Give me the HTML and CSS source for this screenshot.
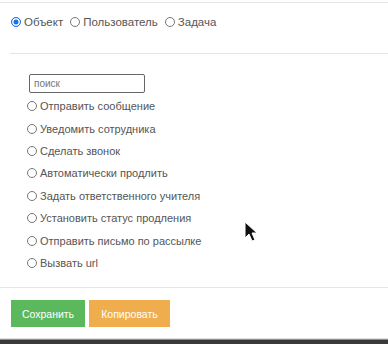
FILE: index.html
```html
<!DOCTYPE html>
<html>
<head>
    <title>Действие</title>
    <link rel="stylesheet" href="styles.css">
</head>
<body>
    <div class="modal">
        <div class="modal-header">
            <label class="choice"><input type="radio" name="type" checked> Объект</label>
            <label class="choice"><input type="radio" name="type"> Пользователь</label>
            <label class="choice"><input type="radio" name="type"> Задача</label>
        </div>
        <div class="modal-body">
            <input type="text" class="search" placeholder="поиск">
            <ul class="actions">
                <li><label><input type="radio" name="action"> Отправить сообщение</label></li>
                <li><label><input type="radio" name="action"> Уведомить сотрудника</label></li>
                <li><label><input type="radio" name="action"> Сделать звонок</label></li>
                <li><label><input type="radio" name="action"> Автоматически продлить</label></li>
                <li><label><input type="radio" name="action"> Задать ответственного учителя</label></li>
                <li><label><input type="radio" name="action"> Установить статус продления</label></li>
                <li><label><input type="radio" name="action"> Отправить письмо по рассылке</label></li>
                <li><label><input type="radio" name="action"> Вызвать url</label></li>
            </ul>
            <svg class="cursor" width="16" height="22" viewBox="0 0 16 22">
                <path d="M1 1 L1 17 L5 13 L8 20 L11 19 L8 12 L13 12 Z" fill="#111" stroke="#fff" stroke-width="1"/>
            </svg>
        </div>
        <div class="modal-footer">
            <button class="btn btn-save">Сохранить</button>
            <button class="btn btn-copy">Копировать</button>
        </div>
    </div>
    <div class="backdrop"></div>
</body>
</html>
```

FILE: styles.css
```css
body {
    margin: 0;
    font-family: "Liberation Sans", Arial, sans-serif;
    font-size: 11px;
    color: #555;
    background-color: #fff;
}

.modal {
    border-top: 1px solid #e5e5e5;
    margin-top: 2px;
}

.modal-header {
    display: flex;
    align-items: center;
    gap: 7px;
    height: 38px;
    padding-left: 11px;
}

.choice {
    display: flex;
    align-items: center;
    gap: 3px;
    font-size: 11.5px;
}

input[type="radio"] {
    appearance: none;
    width: 10px;
    height: 10px;
    margin: 0;
    border: 1px solid #777;
    border-radius: 50%;
    background: #fff;
}

input[type="radio"]:checked {
    border-color: #1a73e8;
    background: #1a73e8;
    box-shadow: inset 0 0 0 1.5px #fff;
}

.modal-body {
    position: relative;
    margin-left: 10px;
    border-top: 1px solid #e5e5e5;
    margin-top: 12px;
    padding: 20px 0 13px 19px;
}

.search {
    box-sizing: border-box;
    width: 116px;
    height: 19px;
    padding: 0 4px;
    border: 1px solid #666;
    border-radius: 2px;
    font-family: inherit;
    font-size: 10px;
    outline: none;
}

.search::placeholder {
    color: #777;
}

.actions {
    list-style: none;
    margin: 2px 0 0 -2px;
    padding: 0;
}

.actions li {
    height: 22.4px;
    display: flex;
    align-items: center;
}

.actions label {
    display: flex;
    align-items: center;
    gap: 3px;
}

.cursor {
    position: absolute;
    left: 234px;
    top: 167px;
}

.modal-footer {
    border-top: 1px solid #e5e5e5;
    padding: 12px 11px 11px;
    display: flex;
    gap: 4px;
}

.btn {
    height: 27px;
    padding: 0 10px;
    border: none;
    color: #fff;
    font-family: inherit;
    font-size: 10.5px;
}

.btn-save {
    width: 74px;
    background-color: #5cb85c;
}

.btn-copy {
    width: 81px;
    background-color: #f0ad4e;
}

.backdrop {
    height: 8px;
    background: linear-gradient(#e0e0e0 0, #e0e0e0 1px, #3a3a3a 2px);
}
```
